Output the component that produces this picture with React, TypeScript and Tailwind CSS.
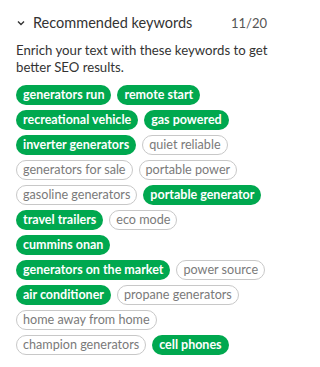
import React from "react";

const chips: [string, boolean][][] = [
  [["generators run", true], ["remote start", true]],
  [["recreational vehicle", true], ["gas powered", true]],
  [["inverter generators", true], ["quiet reliable", false]],
  [["generators for sale", false], ["portable power", false]],
  [["gasoline generators", false], ["portable generator", true]],
  [["travel trailers", true], ["eco mode", false]],
  [["cummins onan", true]],
  [["generators on the market", true], ["power source", false]],
  [["air conditioner", true], ["propane generators", false]],
  [["home away from home", false]],
  [["champion generators", false], ["cell phones", true]],
];

export default function App() {
  return (
    <div
      className="w-[274px] h-[367px] bg-white pl-4 pr-[7px] pt-[11px]"
      style={{ fontFamily: 'Lato, "Open Sans", sans-serif' }}
    >
      <div className="flex items-center h-6">
        <svg width="8" height="6" viewBox="0 0 8 6" className="ml-[1px] mr-[8px]">
          <path d="M1 1.5 L4 4.5 L7 1.5" fill="none" stroke="#333" strokeWidth="1.4" />
        </svg>
        <span className="text-[14.5px] text-[#333] leading-none">Recommended keywords</span>
        <span className="ml-auto text-[13px] text-[#555] leading-none">11/20</span>
      </div>
      <p className="mt-[7px] mr-[-4px] text-[13.2px] leading-[17px] text-[#333]">
        Enrich your text with these keywords to get better SEO results.
      </p>
      <div className="mt-[9px] flex flex-col gap-[5px]">
        {chips.map((row, i) => (
          <div key={i} className="flex gap-[6px]">
            {row.map(([t, on]) =>
              on ? (
                <span
                  key={t}
                  className="h-5 px-[7px] rounded-full bg-[#00a84f] text-white text-[12.5px] font-bold flex items-center leading-none whitespace-nowrap"
                >
                  {t}
                </span>
              ) : (
                <span
                  key={t}
                  className="h-5 px-[6px] rounded-full border border-[#c8c8c8] text-[#7a7a7a] text-[12.6px] flex items-center leading-none whitespace-nowrap"
                >
                  {t}
                </span>
              )
            )}
          </div>
        ))}
      </div>
    </div>
  );
}
